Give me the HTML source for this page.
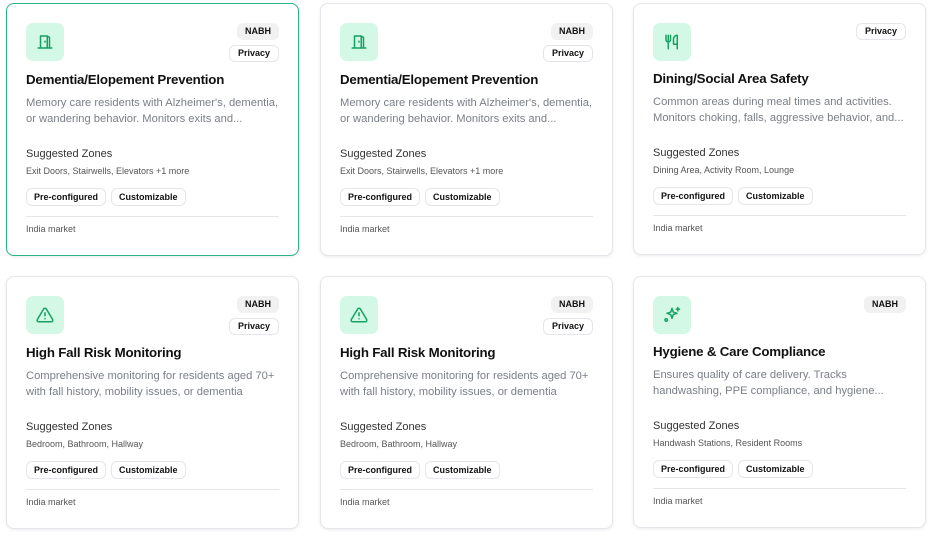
<!DOCTYPE html>
<html><head><meta charset="utf-8"><style>
*{box-sizing:border-box;margin:0;padding:0}
body{width:932px;height:536px;background:#fff;font-family:"Liberation Sans",sans-serif;position:relative;overflow:hidden}
.card{position:absolute;width:293px;height:253px;border:1px solid #e3e6ea;border-radius:8px;background:#fff;box-shadow:0 1px 3px rgba(0,0,0,.08)}
.card.sel{border-color:#2bb583}
.icon{position:absolute;left:19px;top:19px;width:38px;height:38px;border-radius:7px;background:#d3f8e5;display:flex;align-items:center;justify-content:center}
.badges{position:absolute;right:19px;top:19px;display:flex;flex-direction:column;align-items:flex-end;gap:5px}
.b{font-size:9px;font-weight:bold;color:#111;padding:0 8px;height:17px;line-height:17px;border-radius:6px}
.nabh{background:#f1f1f2}
.priv{border:1px solid #e3e6ea;line-height:15px}
.t{position:absolute;left:19px;top:68px;font-size:13.3px;font-weight:bold;color:#111;letter-spacing:-0.2px}
.d{position:absolute;left:19px;top:91px;width:262px;font-size:11.2px;line-height:16px;color:#7a7f87}
.sz{position:absolute;left:19px;top:144px;font-size:11px;color:#333}
.z{position:absolute;left:19px;top:162px;font-size:9px;color:#555}
.tags{position:absolute;left:19px;top:184px;display:flex;gap:5px}
.tg{font-size:9px;font-weight:bold;color:#111;border:1px solid #e3e6ea;border-radius:6px;height:18px;line-height:16px;padding:0 7px}
.hr{position:absolute;left:19px;right:19px;top:212px;border-top:1px solid #e3e6ea}
.m{position:absolute;left:19px;top:220px;font-size:9px;color:#555}
</style></head><body>

<div class="card sel" style="left:6px;top:3px">
<div class="icon"><svg width="18" height="18" viewBox="0 0 24 24" fill="none" stroke="#16a062" stroke-width="2" stroke-linecap="round" stroke-linejoin="round"><path d="M3 20h18M6 20V4h9v16M15 4l3 2v14M12 11v1"/></svg></div>
<div class="badges"><div class="b nabh">NABH</div><div class="b priv">Privacy</div></div>
<div class="t">Dementia/Elopement Prevention</div>
<div class="d">Memory care residents with Alzheimer's, dementia, or wandering behavior. Monitors exits and...</div>
<div class="sz">Suggested Zones</div><div class="z">Exit Doors, Stairwells, Elevators +1 more</div>
<div class="tags"><div class="tg">Pre-configured</div><div class="tg">Customizable</div></div>
<div class="hr"></div><div class="m">India market</div></div>

<div class="card" style="left:320px;top:3px">
<div class="icon"><svg width="18" height="18" viewBox="0 0 24 24" fill="none" stroke="#16a062" stroke-width="2" stroke-linecap="round" stroke-linejoin="round"><path d="M3 20h18M6 20V4h9v16M15 4l3 2v14M12 11v1"/></svg></div>
<div class="badges"><div class="b nabh">NABH</div><div class="b priv">Privacy</div></div>
<div class="t">Dementia/Elopement Prevention</div>
<div class="d">Memory care residents with Alzheimer's, dementia, or wandering behavior. Monitors exits and...</div>
<div class="sz">Suggested Zones</div><div class="z">Exit Doors, Stairwells, Elevators +1 more</div>
<div class="tags"><div class="tg">Pre-configured</div><div class="tg">Customizable</div></div>
<div class="hr"></div><div class="m">India market</div></div>

<div class="card" style="left:633px;top:3px;height:252px">
<div class="icon"><svg width="18" height="18" viewBox="0 0 24 24" fill="none" stroke="#16a062" stroke-width="2" stroke-linecap="round" stroke-linejoin="round"><path d="M4 3v6a3 3 0 0 0 6 0V3M7 3v18M19 15V3a5 5 0 0 0-5 5v6c0 1 1 1 1 1h4v6"/></svg></div>
<div class="badges"><div class="b priv">Privacy</div></div>
<div class="t" style="top:67px">Dining/Social Area Safety</div>
<div class="d" style="top:90px">Common areas during meal times and activities. Monitors choking, falls, aggressive behavior, and...</div>
<div class="sz" style="top:143px">Suggested Zones</div><div class="z" style="top:161px">Dining Area, Activity Room, Lounge</div>
<div class="tags" style="top:183px"><div class="tg">Pre-configured</div><div class="tg">Customizable</div></div>
<div class="hr" style="top:211px"></div><div class="m" style="top:219px">India market</div></div>

<div class="card" style="left:6px;top:276px">
<div class="icon"><svg width="18" height="18" viewBox="0 0 24 24" fill="none" stroke="#16a062" stroke-width="2" stroke-linecap="round" stroke-linejoin="round"><path d="M10.3 3.9L1.8 18a2 2 0 0 0 1.7 3h17a2 2 0 0 0 1.7-3L13.7 3.9a2 2 0 0 0-3.4 0zM12 9v4M12 17h.01"/></svg></div>
<div class="badges"><div class="b nabh">NABH</div><div class="b priv">Privacy</div></div>
<div class="t">High Fall Risk Monitoring</div>
<div class="d">Comprehensive monitoring for residents aged 70+ with fall history, mobility issues, or dementia</div>
<div class="sz">Suggested Zones</div><div class="z">Bedroom, Bathroom, Hallway</div>
<div class="tags"><div class="tg">Pre-configured</div><div class="tg">Customizable</div></div>
<div class="hr"></div><div class="m">India market</div></div>

<div class="card" style="left:320px;top:276px">
<div class="icon"><svg width="18" height="18" viewBox="0 0 24 24" fill="none" stroke="#16a062" stroke-width="2" stroke-linecap="round" stroke-linejoin="round"><path d="M10.3 3.9L1.8 18a2 2 0 0 0 1.7 3h17a2 2 0 0 0 1.7-3L13.7 3.9a2 2 0 0 0-3.4 0zM12 9v4M12 17h.01"/></svg></div>
<div class="badges"><div class="b nabh">NABH</div><div class="b priv">Privacy</div></div>
<div class="t">High Fall Risk Monitoring</div>
<div class="d">Comprehensive monitoring for residents aged 70+ with fall history, mobility issues, or dementia</div>
<div class="sz">Suggested Zones</div><div class="z">Bedroom, Bathroom, Hallway</div>
<div class="tags"><div class="tg">Pre-configured</div><div class="tg">Customizable</div></div>
<div class="hr"></div><div class="m">India market</div></div>

<div class="card" style="left:633px;top:276px;height:252px">
<div class="icon"><svg width="20" height="20" viewBox="0 0 24 24" fill="none" stroke="#16a062" stroke-width="1.8" stroke-linecap="round" stroke-linejoin="round"><path d="M12 4l1.5 4.5L18 10l-4.5 1.5L12 16l-1.5-4.5L6 10l4.5-1.5zM19 3v4M17 5h4"/><circle cx="5" cy="18" r="1.5"/></svg></div>
<div class="badges"><div class="b nabh">NABH</div></div>
<div class="t" style="top:67px">Hygiene &amp; Care Compliance</div>
<div class="d" style="top:90px">Ensures quality of care delivery. Tracks handwashing, PPE compliance, and hygiene...</div>
<div class="sz" style="top:143px">Suggested Zones</div><div class="z" style="top:161px">Handwash Stations, Resident Rooms</div>
<div class="tags" style="top:183px"><div class="tg">Pre-configured</div><div class="tg">Customizable</div></div>
<div class="hr" style="top:211px"></div><div class="m" style="top:219px">India market</div></div>

</body></html>
